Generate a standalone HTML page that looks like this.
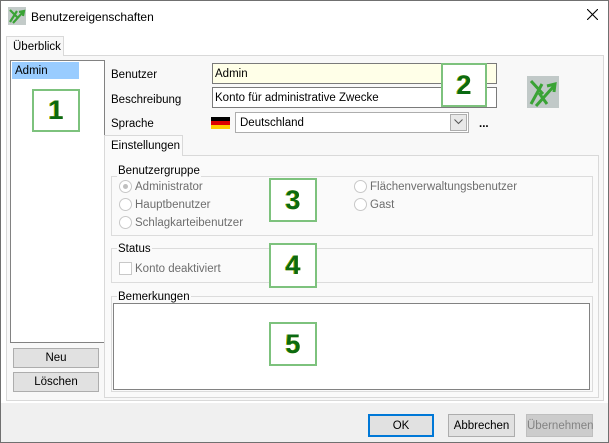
<!DOCTYPE html>
<html><head><meta charset="utf-8"><style>
*{box-sizing:border-box;margin:0;padding:0}
body{width:609px;height:443px;position:relative;background:#f0f0f0;font-family:"Liberation Sans",sans-serif;font-size:11.5px;color:#000;overflow:hidden}
.a{position:absolute}
.t{white-space:nowrap}
.box{position:absolute;border:2px solid #7dc27d;background:#fff;color:#0a6a12;font-weight:bold;font-size:27px;text-align:center;text-shadow:-1px 0 0 #c8b400}
.btn{position:absolute;border:1px solid #adadad;background:#e1e1e1;text-align:center;font-size:11.5px}
.rad{position:absolute;width:13px;height:13px;border:1px solid #c8c8c8;border-radius:50%;background:#fff}
.g{color:#6d6d6d}
.grp{position:absolute;border:1px solid #dcdcdc}
.leg{position:absolute;background:#fafafa;padding:0 1px}
</style></head><body>
<div class="a" style="left:0;top:0;width:609px;height:443px;border:1px solid #707070"></div>
<div class="a" style="left:1px;top:1px;width:607px;height:402px;background:#fff"></div>
<svg class="a" style="left:8px;top:7px" width="18" height="18"><rect width="18" height="18" fill="#c3cbc9"/><path d="M2 3 L9 10 M9 4 L2 15 M5 16 L15 5 M11 5 L16 4 L15 9" stroke="#3aa335" stroke-width="2.2" fill="none"/></svg>
<div class="a t" style="left:31px;top:10px;font-size:12px">Benutzereigenschaften</div>
<svg class="a" style="left:587px;top:9px" width="11" height="11"><path d="M0 0L11 11M11 0L0 11" stroke="#000" stroke-width="1.1"/></svg>
<div class="a" style="left:6px;top:55px;width:598px;height:346px;border:1px solid #d9d9d9;background:#f8f8f8"></div>
<div class="a" style="left:6px;top:36px;width:58px;height:20px;border:1px solid #d9d9d9;border-bottom:none;background:#f8f8f8"></div>
<div class="a t" style="left:13px;top:41px">Überblick</div>
<div class="a" style="left:10px;top:60px;width:95px;height:283px;border:1px solid #828282;background:#fff"></div>
<div class="a t" style="left:12px;top:62px;width:67px;height:17px;background:#99ccff;padding:3px 0 0 3px">Admin</div>
<div class="box" style="left:32px;top:89px;width:48px;height:43px;line-height:39px">1</div>
<div class="btn" style="left:13px;top:348px;width:86px;height:20px;line-height:19px">Neu</div>
<div class="btn" style="left:13px;top:372px;width:86px;height:20px;line-height:19px">Löschen</div>
<div class="a t" style="left:111px;top:69px">Benutzer</div>
<div class="a t" style="left:111px;top:94px">Beschreibung</div>
<div class="a t" style="left:111px;top:118px">Sprache</div>
<div class="a t" style="left:212px;top:63px;width:285px;height:21px;border:1px solid #7a7a7a;background:#ffffe8;padding:4px 0 0 2px">Admin</div>
<div class="a t" style="left:212px;top:87px;width:285px;height:21px;border:1px solid #7a7a7a;background:#fff;padding:4px 0 0 2px">Konto für administrative Zwecke</div>
<div class="box" style="left:441px;top:63px;width:46px;height:44px;line-height:40px">2</div>
<div class="a" style="left:211px;top:117px;width:19px;height:12px;background:linear-gradient(#000 33%,#d00 33%,#d00 66%,#fc0 66%)"></div>
<div class="a t" style="left:235px;top:112px;width:234px;height:21px;border:1px solid #adadad;background:#fff;padding:4px 0 0 4px">Deutschland</div>
<div class="a" style="left:450px;top:114px;width:17px;height:17px;border:1px solid #adadad;background:#e8e8e8"></div>
<svg class="a" style="left:454px;top:119px" width="9" height="6"><path d="M0.5 0.5L4.5 4.5L8.5 0.5" stroke="#555" fill="none"/></svg>
<div class="a t" style="left:479px;top:118px;font-weight:bold">...</div>
<svg class="a" style="left:527px;top:76px" width="32" height="32"><rect width="32" height="32" fill="#c1c9c8"/><path d="M4 5 L16 18 M15 8 L4 28 M9 30 L27 10 M20 10 L28 8 L27 16 M12 17 L20 28" stroke="#3aa335" stroke-width="3" fill="none"/></svg>
<div class="a" style="left:104px;top:155px;width:495px;height:243px;border:1px solid #d9d9d9;background:#fafafa"></div>
<div class="a" style="left:104px;top:135px;width:79px;height:21px;border:1px solid #d9d9d9;border-bottom:none;background:#fafafa"></div>
<div class="a t" style="left:111px;top:140px">Einstellungen</div>
<div class="grp" style="left:111px;top:176px;width:482px;height:60px"></div>
<div class="leg t" style="left:117px;top:165px">Benutzergruppe</div>
<div class="rad" style="left:119px;top:180px"></div><div class="a" style="left:123px;top:184px;width:5px;height:5px;border-radius:50%;background:#c0c0c0"></div>
<div class="a t g" style="left:135px;top:181px">Administrator</div>
<div class="rad" style="left:119px;top:198px"></div><div class="a t g" style="left:135px;top:199px">Hauptbenutzer</div>
<div class="rad" style="left:119px;top:216px"></div><div class="a t g" style="left:135px;top:217px">Schlagkarteibenutzer</div>
<div class="rad" style="left:354px;top:180px"></div><div class="a t g" style="left:370px;top:181px">Flächenverwaltungsbenutzer</div>
<div class="rad" style="left:354px;top:198px"></div><div class="a t g" style="left:370px;top:199px">Gast</div>
<div class="box" style="left:269px;top:178px;width:48px;height:44px;line-height:40px">3</div>
<div class="grp" style="left:111px;top:248px;width:482px;height:35px"></div>
<div class="leg t" style="left:117px;top:243px">Status</div>
<div class="a" style="left:119px;top:262px;width:13px;height:13px;border:1px solid #c8c8c8;background:#fff"></div>
<div class="a t g" style="left:135px;top:263px">Konto deaktiviert</div>
<div class="box" style="left:269px;top:243px;width:48px;height:45px;line-height:41px">4</div>
<div class="grp" style="left:111px;top:296px;width:482px;height:96px"></div>
<div class="leg t" style="left:117px;top:291px">Bemerkungen</div>
<div class="a" style="left:113px;top:303px;width:477px;height:87px;border:1px solid #828282;background:#fff"></div>
<div class="box" style="left:269px;top:322px;width:48px;height:44px;line-height:40px">5</div>
<div class="btn" style="left:368px;top:414px;width:66px;height:23px;line-height:20px;border:2px solid #0078d7">OK</div>
<div class="btn" style="left:448px;top:414px;width:67px;height:23px;line-height:22px">Abbrechen</div>
<div class="btn" style="left:526px;top:414px;width:67px;height:23px;line-height:22px;border-color:#bfbfbf;background:#ccc;color:#838383">Übernehmen</div>
</body></html>
